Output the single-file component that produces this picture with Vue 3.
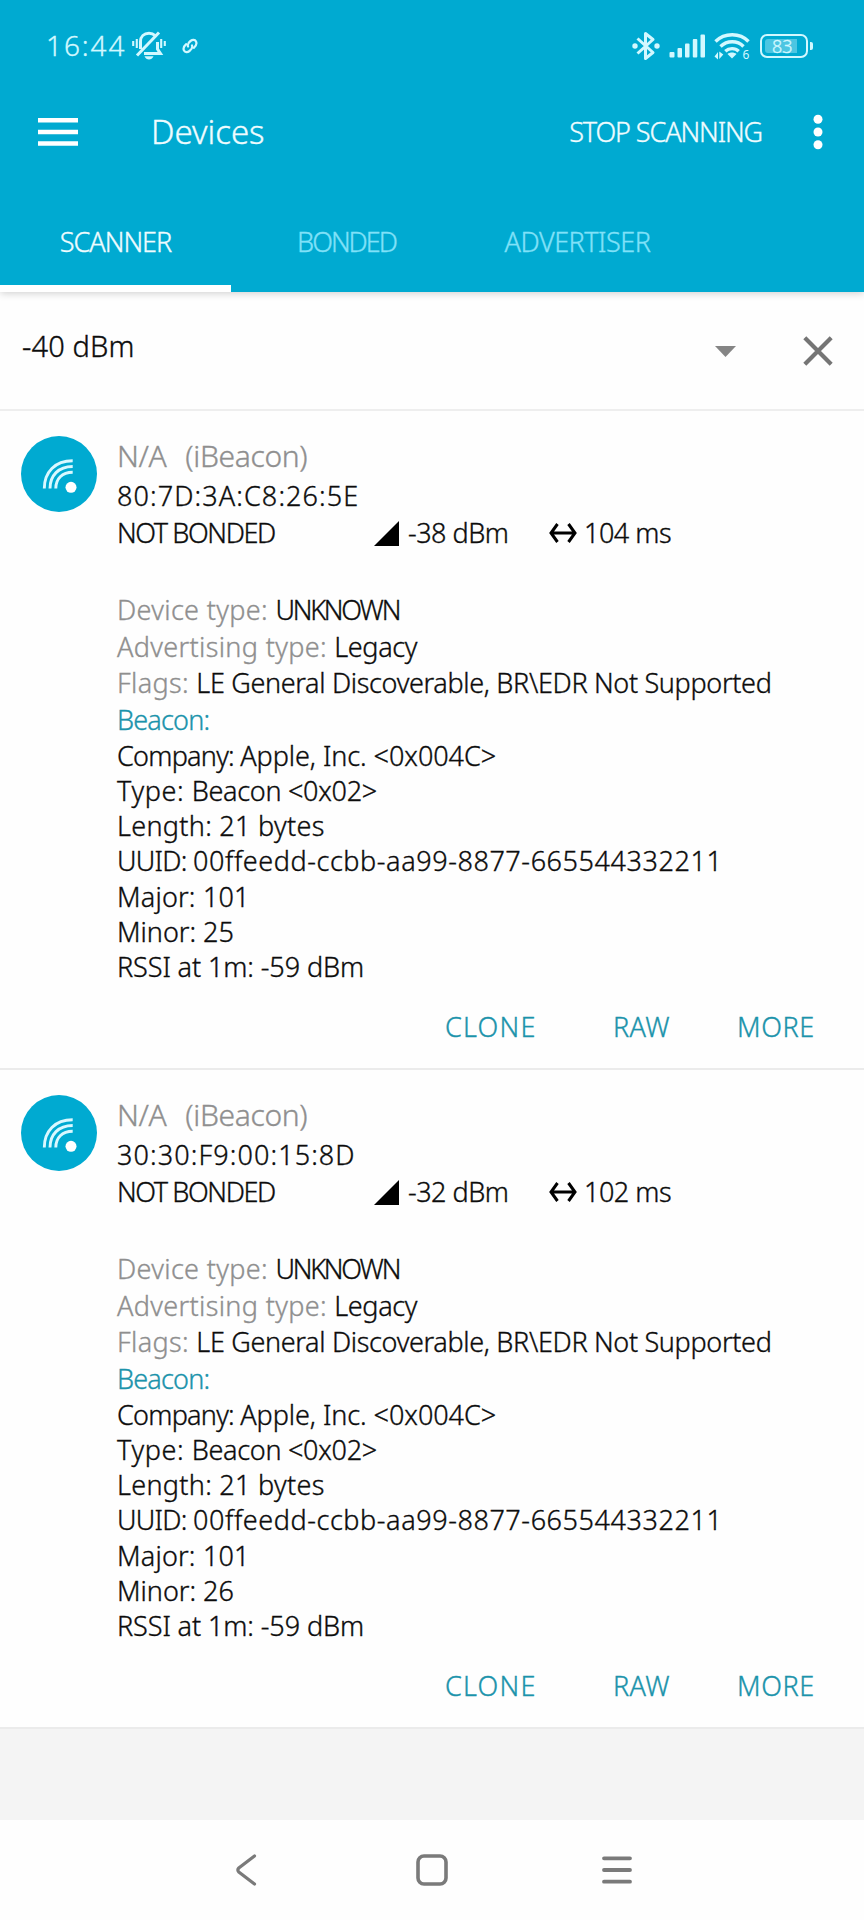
<script setup>
import { ref } from 'vue';

const tabs = ['Scanner', 'Bonded', 'Advertiser'];
const activeTab = ref('Scanner');
const filter = ref('-40 dBm');

const beacon = (minor) => [
  { key: 'company', label: 'Company: ', value: 'Apple, Inc. <0x004C>' },
  { key: 'type', label: 'Type: ', value: 'Beacon <0x02>' },
  { key: 'length', label: 'Length: ', value: '21 bytes' },
  { key: 'uuid', label: 'UUID: ', value: '00ffeedd-ccbb-aa99-8877-665544332211' },
  { key: 'major', label: 'Major: ', value: '101' },
  { key: 'minor', label: 'Minor: ', value: minor },
  { key: 'rssi', label: 'RSSI at 1m: ', value: '-59 dBm' }
];

const devices = ref([
  { address: '80:7D:3A:C8:26:5E', rssi: '-38 dBm', interval: '104 ms', beacon: beacon(25) },
  { address: '30:30:F9:00:15:8D', rssi: '-32 dBm', interval: '102 ms', beacon: beacon(26) }
]);
</script>

<template>
  <div class="screen">
    <header class="header">
      <div class="status">
        <span class="clock">16:44</span>
        <svg class="bell" width="34" height="30" viewBox="0 0 34 30" fill="none" stroke="currentColor">
          <path d="M1.200 10v5M4.800 8v9M29.200 8v9M32.800 10v5" stroke-width="2.100" />
          <path d="M8.500 18v-7.500C8.500 5.500 12 2.200 17 2.200c2.600 0 4.600.900 6 2.400M25.500 11v7l3 4.600H12" stroke-width="3" />
          <path d="M5 24.500 27 1.500" stroke-width="3" />
          <path d="M12.500 25.300h9c-1 2.200-2.600 3.200-4.500 3.200s-3.500-1-4.500-3.200z" fill="currentColor" stroke="none" />
        </svg>
        <svg class="link" width="16" height="16" viewBox="0 0 16 16" fill="none" stroke="currentColor" stroke-width="2.200" stroke-linecap="round">
          <path d="M4.200 6.200C1.500 8.500 1 10.500 2 12.500s3.500 2 5.500.500 3.200-3.500 2.500-5.500" />
          <path d="M11.800 9.800C14.500 7.500 15 5.500 14 3.500s-3.500-2-5.500-.500S5.300 6.500 6 8.500" />
        </svg>
        <div class="spacer"></div>
        <svg class="bluetooth" width="28" height="30" viewBox="0 0 28 30" fill="none" stroke="currentColor" stroke-width="3">
          <path d="M5.500 7.500 21 21.500l-7.500 6V2.500L21 8.500 5.500 22.500" stroke-linejoin="round" />
          <circle cx="3" cy="15" r="2.700" fill="currentColor" stroke="none" />
          <circle cx="25" cy="15" r="2.700" fill="currentColor" stroke="none" />
        </svg>
        <svg class="signal" width="37" height="24" viewBox="0 0 37 24" fill="currentColor">
          <rect x="0.500" y="18" width="5" height="5.500" rx="1" />
          <rect x="8.500" y="14" width="4.500" height="9.500" rx="1" />
          <rect x="16" y="9.500" width="4.500" height="14" rx="1" />
          <rect x="23.800" y="5" width="4.500" height="18.500" rx="1" />
          <rect x="31.500" y="0.500" width="4.500" height="23" rx="1" />
        </svg>
        <svg class="wifi" width="38" height="34" viewBox="0 -3 38 34" fill="none" stroke="currentColor" stroke-width="3.400">
          <path d="M1.500 9.500c9-9 24.500-9 33 0M6.500 14.500c6.500-6.300 17-6.300 23 0M11.300 19.200c3.800-3.500 9.800-3.500 13.400 0" />
          <path d="M13.500 22c2.500-2 6.500-2 9 0L18 26.500z" fill="currentColor" stroke="none" />
          <path d="M.500 24.500 4 20v7.500zM5.300 19.500v7.500l4-4.500z" fill="currentColor" stroke="none" />
          <text x="28.500" y="26.500" class="wifi-gen">6</text>
        </svg>
        <div class="battery">
          <div class="battery-body"><span>83</span></div>
          <div class="battery-tip"></div>
        </div>
      </div>

      <div class="appbar">
        <svg width="40" height="28" viewBox="0 0 40 28" fill="#fff">
          <path d="M0 0h40v4.500H0zM0 11.700h40v4.500H0zM0 23.300h40v4.500H0z" />
        </svg>
        <h1>Devices</h1>
        <button class="stop">STOP SCANNING</button>
        <svg width="10" height="36" viewBox="0 0 10 36" fill="#fff">
          <circle cx="5" cy="5.300" r="4.500" />
          <circle cx="5" cy="18" r="4.500" />
          <circle cx="5" cy="30.700" r="4.500" />
        </svg>
      </div>

      <nav class="tabs">
        <button
          v-for="tab in tabs"
          :key="tab"
          :class="['tab', tab.toLowerCase(), { active: tab === activeTab }]"
          @click="activeTab = tab"
        >
          {{ tab.toUpperCase() }}
        </button>
      </nav>
    </header>

    <div class="filter">
      <span class="filter-value">{{ filter }}</span>
      <svg class="caret" width="21" height="11" viewBox="0 0 21 11"><path d="M0 0h21L10.500 11z" fill="#858585" /></svg>
      <svg class="close" width="30" height="30" viewBox="0 0 30 30">
        <path d="M1.800 1.800 28.200 28.200M28.200 1.800 1.800 28.200" stroke="#757575" stroke-width="4.200" />
      </svg>
    </div>

    <article v-for="device in devices" :key="device.address" class="card">
      <svg class="avatar" width="76" height="76" viewBox="0 0 76 76">
        <circle cx="38" cy="38" r="38" fill="#00aad1" />
        <g fill="none" stroke="#d9f8ff" stroke-width="2.900">
          <path d="M23.300 52.500C23.300 36 34 24.700 51.700 24.700" />
          <path d="M29 52.500C29 39.500 37.500 30.500 51.700 30.500" />
          <path d="M34.800 52.500C34.800 43 41 36.300 51.700 36.300" />
        </g>
        <circle cx="50" cy="51.300" r="5.500" fill="#fff" />
      </svg>

      <div class="content">
        <h2>N/A&nbsp; (iBeacon)</h2>
        <p class="address">{{ device.address }}</p>
        <div class="meta">
          <span class="bond">NOT BONDED</span>
          <svg width="25" height="25" viewBox="0 0 25 25"><path d="M25 0v25H0z" /></svg>
          <span class="reading">{{ device.rssi }}</span>
          <svg width="28" height="20" viewBox="0 0 28 20" fill="none" stroke="#000" stroke-width="3">
            <path d="M2 10h24M8.500 1 2 10l6.500 9M19.500 1 26 10l-6.500 9" />
          </svg>
          <span class="reading">{{ device.interval }}</span>
        </div>

        <div class="details">
          <p><span class="label">Device type: </span><span class="unknown">UNKNOWN</span></p>
          <p><span class="label">Advertising type: </span><span class="legacy">Legacy</span></p>
          <p><span class="label">Flags: </span><span class="flags">LE General Discoverable, BR\EDR Not Supported</span></p>
          <p class="section">Beacon:</p>
        </div>
        <div class="beacon">
          <p v-for="row in device.beacon" :key="row.key" :class="row.key">
            <span class="name">{{ row.label }}</span><span>{{ row.value }}</span>
          </p>
        </div>

        <div class="actions">
          <button class="clone">CLONE</button>
          <button class="raw">RAW</button>
          <button class="more">MORE</button>
        </div>
      </div>
    </article>

    <div class="empty"></div>

    <footer class="navbar">
      <svg width="21" height="32" viewBox="0 0 21 32" fill="none" stroke="#7a7a7a" stroke-width="3.200">
        <path d="M18.500 2 2.800 14q-2 2 0 4L18.500 30" stroke-linecap="round" />
      </svg>
      <svg class="home" width="32" height="32" viewBox="0 0 32 32" fill="none" stroke="#7a7a7a" stroke-width="3.600">
        <rect x="2" y="2" width="28" height="28" rx="6" />
      </svg>
      <svg width="30" height="30" viewBox="0 0 30 30" stroke="#7a7a7a" stroke-width="3.800" stroke-linecap="round">
        <path d="M2 3.300h26M2 15h26M2 26.700h26" />
      </svg>
    </footer>
  </div>
</template>

<style>
body {
  background: #fff;
}
</style>

<style scoped>
.screen {
  display: flex;
  flex-direction: column;
  width: 864px;
  height: 1920px;
  background: #fefefe;
  color: #0c0c0c;
  font-family: 'Noto Sans', sans-serif;
  font-size: 27px;
  font-weight: 300;
  -webkit-text-stroke: 0.35px currentColor;
}

h1, h2, p {
  margin: 0;
  font-weight: inherit;
  white-space: nowrap;
}

button {
  padding: 0;
  border: none;
  background: none;
  color: inherit;
  font: inherit;
  text-align: left;
  white-space: nowrap;
  cursor: pointer;
}

svg {
  display: block;
  flex-shrink: 0;
}

.header {
  position: relative;
  z-index: 1;
  height: 292px;
  background: #00aad1;
  color: #effcff;
  box-shadow: 0 1px 8px rgba(0, 0, 0, 0.2);
}

.status {
  display: flex;
  align-items: center;
  height: 91px;
  padding: 0 50px 0 46px;
  color: #d2f8ff;
}

.clock {
  width: 86px;
  margin-bottom: 2px;
  font-size: 28px;
  letter-spacing: 1.9px;
}

.link {
  margin-left: 16px;
}

.spacer {
  flex: 1;
}

.signal {
  margin-left: 9px;
}

.wifi {
  margin-left: 8px;
}

.wifi-gen {
  fill: currentColor;
  stroke: none;
  font-size: 12px;
  font-weight: 400;
}

.battery {
  display: flex;
  align-items: center;
  gap: 2px;
  margin-left: 8px;
  margin-right: 1px;
}

.battery-body {
  box-sizing: border-box;
  width: 48px;
  height: 24px;
  padding: 3px;
  border: 2px solid currentColor;
  border-radius: 7px;
}

.battery-body span {
  display: block;
  width: 32px;
  height: 14px;
  padding-left: 7px;
  box-sizing: border-box;
  border-radius: 3px 0 0 3px;
  background: #4cc6e2;
  font-size: 18px;
  line-height: 14px;
}

.battery-tip {
  width: 3px;
  height: 8px;
  border-radius: 0 2px 2px 0;
  background: currentColor;
}

.appbar {
  display: flex;
  align-items: center;
  height: 82px;
  padding: 0 41px 0 38px;
}

h1 {
  flex: 1;
  margin: 0 0 2px 73px;
  font-size: 33px;
}

.stop {
  margin: 0 51px 1px 0;
  letter-spacing: -1.1px;
}

.tabs {
  display: flex;
  height: 119px;
}

.tab {
  box-sizing: border-box;
  width: 231px;
  padding-top: 24px;
  border-bottom: 7px solid transparent;
  text-align: center;
  color: #80e1f8;
}

.tab.active {
  border-color: #fff;
  color: #effcff;
}

.scanner {
  letter-spacing: -1px;
}

.bonded {
  letter-spacing: -2px;
}

.advertiser {
  letter-spacing: -0.5px;
}

.filter {
  display: flex;
  align-items: center;
  box-sizing: border-box;
  height: 119px;
  padding: 0 31px 0 22px;
  border-bottom: 2px solid #eee;
}

.filter-value {
  flex: 1;
  margin-bottom: 11px;
  font-size: 29px;
  letter-spacing: 0.15px;
}

.caret {
  margin-top: 2px;
}

.close {
  margin-left: 67px;
}

.card {
  display: flex;
  box-sizing: border-box;
  height: 659px;
  padding: 25px 0 0 21px;
  border-bottom: 2px solid #ebebeb;
}

.content {
  flex: 1;
  margin-left: 20px;
}

h2 {
  margin-bottom: 2px;
  color: #8f8f8f;
  font-size: 30px;
  line-height: 40px;
  letter-spacing: -0.35px;
  word-spacing: 2px;
}

.address {
  line-height: 36px;
  letter-spacing: 1.1px;
}

.meta {
  display: grid;
  grid-template-columns: 257px 34px 141px 35px auto;
  align-items: center;
  margin-top: 1px;
  line-height: 36px;
}

.bond {
  letter-spacing: -1.4px;
}

.reading {
  letter-spacing: -0.5px;
}

.details {
  margin-top: 41px;
  line-height: 36.7px;
}

.label {
  color: #8f8f8f;
  letter-spacing: 0.35px;
}

.unknown {
  letter-spacing: -2.2px;
}

.legacy {
  letter-spacing: -0.4px;
}

.flags {
  letter-spacing: -0.33px;
}

.section {
  color: #1b93ab;
  letter-spacing: -0.8px;
}

.beacon {
  margin-top: -1px;
  line-height: 35.2px;
}

.company {
  letter-spacing: -0.05px;
}

.company .name {
  letter-spacing: -0.75px;
}

.type {
  letter-spacing: -0.3px;
}

.type .name {
  letter-spacing: 0.6px;
}

.length {
  letter-spacing: 0.3px;
}

.uuid {
  letter-spacing: 0.57px;
}

.uuid .name {
  letter-spacing: -0.7px;
}

.major {
  letter-spacing: 0.2px;
}

.rssi {
  letter-spacing: -0.1px;
}

.actions {
  display: grid;
  grid-template-columns: 168px 124px auto;
  margin-top: 25px;
  padding-left: 328px;
  color: #1b93ab;
  line-height: 36px;
}

.clone {
  letter-spacing: 1.2px;
}

.raw {
  letter-spacing: 0.4px;
}

.more {
  letter-spacing: 0.6px;
}

.empty {
  flex: 1;
  background: #f4f4f4;
}

.navbar {
  display: flex;
  align-items: center;
  height: 100px;
  padding-left: 236px;
}

.home {
  margin: 0 154px 0 159px;
}
</style>
